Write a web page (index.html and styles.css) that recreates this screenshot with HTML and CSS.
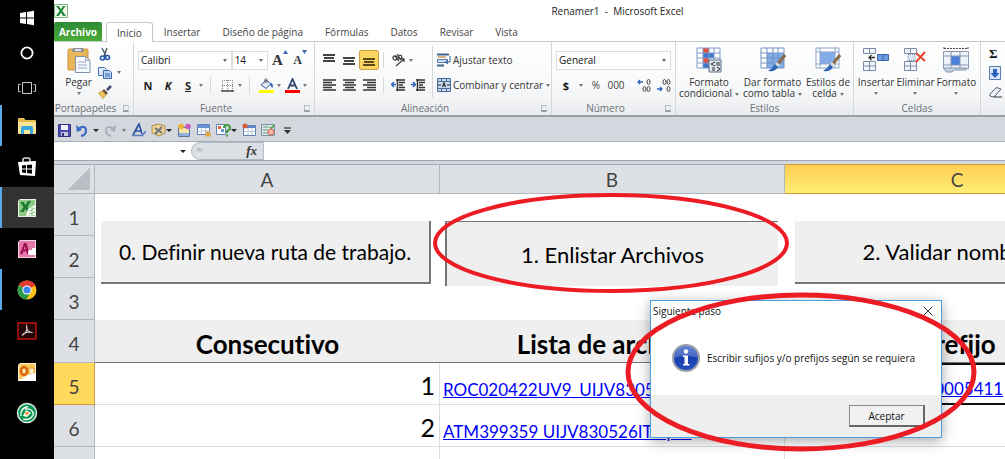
FILE: index.html
```html
<!DOCTYPE html>
<html lang="es">
<head>
    <meta charset="UTF-8">
    <meta name="viewport" content="width=device-width, initial-scale=1.0">
    <title>Renamer1 - Microsoft Excel</title>
    <link rel="stylesheet" href="styles.css">
</head>
<body>

<nav class="taskbar" aria-label="Barra de tareas">
    <button class="task short" aria-label="Inicio de Windows">
        <svg width="16" height="16" viewBox="0 0 16 16" fill="#fff"><path d="M1 3l6-1v5.500H1zM8 1.900l7-1.100v6.700H8zM1 8.500h6V14l-6-.9zM8 8.500h7v6.700L8 14.100z"/></svg>
    </button>
    <button class="task short" aria-label="Cortana">
        <svg width="16" height="16" viewBox="0 0 16 16"><circle cx="8" cy="8" r="5.600" fill="none" stroke="#fff" stroke-width="1.800"/></svg>
    </button>
    <button class="task short" aria-label="Vista de tareas">
        <svg width="20" height="16" viewBox="0 0 20 16" fill="none" stroke="#ccc"><path d="M5.500 2.500h9v11h-9zM3.500 4.500h-2v7h2M16.500 4.500h2v7h-2"/></svg>
    </button>
    <button class="task open" aria-label="Explorador de archivos">
        <svg width="20" height="18" viewBox="0 0 20 18"><path d="M1 2q0-1 1-1h5l1.500 2H18q1 0 1 1v12H1z" fill="#e9bd4f"/><path d="M1 5h18v11q0 1-1 1H2q-1 0-1-1z" fill="#fbe596"/><path d="M4 17v-6q0-2 2-2h8q2 0 2 2v6h-3v-4H7v4z" fill="#35a9e0"/></svg>
    </button>
    <button class="task" aria-label="Tienda">
        <svg width="22" height="22" viewBox="0 0 22 22"><path d="M7 6V4q0-2 2-2h3q2 0 2 2v2" fill="none" stroke="#ddd" stroke-width="1.500"/><path d="M2 6l18-1-1 15-15-1z" fill="#fff"/><path d="M6 9.500l4-.5v3.500H6zM11 9l5-.6v4.100h-5zM6 13.500h4V17l-4-.5zM11 13.500h5v4.200l-5-.6z" fill="#000"/></svg>
    </button>
    <button class="task open active" aria-label="Excel">
        <svg width="20" height="20" viewBox="0 0 20 20"><path d="M3 1h16v18H1V3z" fill="#e4f3e0"/><path d="M3 2h15v16H2V3z" fill="#8fcb86"/><path d="M3 4h3.500l2 3 2.500-4h3L10.500 9l3.500 5h-3.500l-2-3-2 3H3l3.500-5z" fill="#1d7a34"/><path d="M11 11l7-4v10l-9 1z" fill="#fff"/><path d="M12 13l6-3M12 16l6-2M15 9v8" stroke="#67b35f" stroke-width=".8"/></svg>
    </button>
    <button class="task" aria-label="Access">
        <svg width="20" height="20" viewBox="0 0 20 20"><path d="M3 1h16v18H1V3z" fill="#f8d3e4"/><path d="M3 2h15v16H2V3z" fill="#e279aa"/><path d="M3 15L7 4h2.500l3 11H10l-.7-2.500H6.200L5.500 15zM6.700 10.500h2L7.900 7.300z" fill="#9c1250"/><path d="M12 11h3V9h4v7h-7q-2-2 0-5z" fill="#fff"/></svg>
    </button>
    <button class="task open" aria-label="Chrome">
        <svg width="20" height="20" viewBox="0 0 20 20"><circle cx="10" cy="10" r="9.500" fill="#fbc116"/><path d="M10 10L1.800 5.200A9.500 9.500 0 0 1 18.200 5.200z" fill="#e33b2e"/><path d="M10 10L1.800 5.200A9.500 9.500 0 0 0 9.500 19.500L13.500 12z" fill="#2a9d4a"/><path d="M10 5.200h8.200L10 10z" fill="#e33b2e"/><circle cx="10" cy="10" r="4.600" fill="#fff"/><circle cx="10" cy="10" r="3.600" fill="#3f83ee"/></svg>
    </button>
    <button class="task" aria-label="Adobe Reader">
        <svg width="20" height="18" viewBox="0 0 20 18"><path d="M1 1h18v16H1z" fill="#250405" stroke="#c1140f" stroke-width="1.400"/><path d="M9.500 4C11 7 9 11 5 13.500 7 10.500 11 9.500 15.500 10.500 12.500 11 9 8 9.500 4z" fill="none" stroke="#ccc" stroke-width="1.200"/></svg>
    </button>
    <button class="task" aria-label="Outlook">
        <svg width="20" height="20" viewBox="0 0 20 20"><path d="M3 1h16v18H1V3z" fill="#fdeec4"/><path d="M3 2h15v16H2V3z" fill="#f9c95f"/><ellipse cx="7" cy="9" rx="3" ry="4" fill="#fbe3a6" stroke="#d9660a" stroke-width="2.400"/><path d="M12 6h5v6h-5z" fill="#fff3cf" stroke="#e79423"/><path d="M2 18l7-4 4-2 6-1v8H2z" fill="#fff"/></svg>
    </button>
    <button class="task" aria-label="Sincronización">
        <svg width="22" height="22" viewBox="0 0 22 22"><circle cx="11" cy="11" r="9.500" fill="#0d9450" stroke="#dcebe2" stroke-width="1.500"/><path d="M5 14Q4 6 12 4.500M9 7q8-1 8.500 6M17 13q-3 6-10 4" fill="none" stroke="#fff" stroke-width="1.300"/><path d="M10 8l5 3-4 4-4-1z" fill="#fff"/><circle cx="11" cy="11.500" r="1.800" fill="#f29a3f"/></svg>
    </button>
</nav>

<main class="excel">
    <header class="titlebar">
        <svg class="app-icon" width="14" height="14" viewBox="0 0 14 14"><path d="M.5.500h13v13H.5z" fill="#f4faf2" stroke="#7db97d"/><path d="M2 2h2.800L7 5l2-3h2.500L8.300 6.800 12 12H9L7 8.800 4.800 12H2l3.600-5.200z" fill="#278a3a"/></svg>
        <h1>Renamer1&nbsp; -&nbsp; Microsoft Excel</h1>
    </header>

    <nav class="tabs">
        <button class="file-tab">Archivo</button>
        <button class="tab selected">Inicio</button>
        <button class="tab">Insertar</button>
        <button class="tab">Diseño de página</button>
        <button class="tab">Fórmulas</button>
        <button class="tab">Datos</button>
        <button class="tab">Revisar</button>
        <button class="tab">Vista</button>
    </nav>

    <div class="ribbon">
        <section class="group clipboard">
            <div class="group-body">
                <button class="big">
                    <svg width="24" height="26" viewBox="0 0 24 26"><path d="M1 3q0-1 1-1h18q1 0 1 1v20H1z" fill="#eab65a" stroke="#c99443"/><path d="M6 1h10l1 4H5z" fill="#8b9099"/><path d="M8 2h6v2H8z" fill="#dfe3e8"/><path d="M8.500 9.500h10l4.500 4v12H8.500z" fill="#f6f9fd" stroke="#8193b0"/><path d="M18.500 9.500v4H23M11 15h8M11 18h9M11 21h9" fill="none" stroke="#93a6c4"/></svg>
                    <span>Pegar</span>
                    <i class="arrow"></i>
                </button>
                <div class="stack">
                    <button aria-label="Cortar"><svg width="14" height="14" viewBox="0 0 14 14"><path d="M4 1l4 8M9 1L6 9" stroke="#4b5668" stroke-width="1.400"/><circle cx="4.500" cy="11" r="2" fill="none" stroke="#2554a8" stroke-width="1.600"/><circle cx="9.500" cy="10.500" r="2" fill="none" stroke="#2554a8" stroke-width="1.600"/></svg></button>
                    <button aria-label="Copiar"><svg width="14" height="14" viewBox="0 0 14 14"><path d="M.5 1.500h6l2 2v6h-8z" fill="#dce8f8" stroke="#4c75b5"/><path d="M5.500 4.500h6l2 2v6h-8z" fill="#b9d0f0" stroke="#3d68ad"/><path d="M7 8h5M7 10h5" stroke="#3d68ad"/></svg><i class="arrow"></i></button>
                    <button aria-label="Copiar formato"><svg width="14" height="14" viewBox="0 0 14 14"><path d="M13 1L9 5" stroke="#444b77" stroke-width="2.500"/><path d="M6 4l4 4-2 2-4-4z" fill="#6a5a3e"/><path d="M4 6l4 4-3 3.500L.5 8z" fill="#edc557" stroke="#b58c2c" stroke-width=".7"/></svg></button>
                </div>
            </div>
            <h2>Portapapeles</h2><i class="launcher"></i>
        </section>

        <section class="group font">
            <div class="group-body rows">
                <div class="row">
                    <label class="combo family"><select aria-label="Fuente"><option>Calibri</option></select></label>
                    <label class="combo size"><select aria-label="Tamaño"><option>14</option></select></label>
                    <button class="ic grow" aria-label="Aumentar tamaño"><span class="serif">A</span><svg width="5" height="4" viewBox="0 0 5 4"><path d="M0 4l2.500-4L5 4z" fill="#3c66b4"/></svg></button>
                    <button class="ic grow" aria-label="Disminuir tamaño"><span class="serif small">A</span><svg width="5" height="4" viewBox="0 0 5 4"><path d="M0 0h5L2.500 4z" fill="#3c66b4"/></svg></button>
                </div>
                <div class="row">
                    <button class="ic glyph">N</button>
                    <button class="ic glyph italic">K</button>
                    <button class="ic glyph underline">S</button>
                    <i class="arrow"></i>
                    <i class="sep"></i>
                    <button class="ic" aria-label="Bordes"><svg width="13" height="13" viewBox="0 0 13 13"><path d="M1 1.500h11M1 6.500h11M1.500 1v11M6.500 1v11M11.500 1v11" stroke="#888" stroke-dasharray="1 1"/><path d="M0 12h13" stroke="#444" stroke-width="1.500"/></svg></button>
                    <i class="arrow"></i>
                    <i class="sep"></i>
                    <button class="ic" aria-label="Color de relleno"><svg width="15" height="15" viewBox="0 0 15 15"><path d="M2 7l5-5 5 4-5 4.500z" fill="#dbe7f5" stroke="#46699c"/><path d="M6 5V1.500q1-2 2 0V5" fill="none" stroke="#555"/><path d="M11 5q4 0 2.500 5-2-1-2.500-5z" fill="#2f61ad"/><path d="M0 12h15v3H0z" fill="#ff0"/></svg></button>
                    <i class="arrow"></i>
                    <button class="ic" aria-label="Color de fuente"><svg width="15" height="15" viewBox="0 0 15 15"><path d="M3 11L7.500 1 12 11M4.500 7.500h6" fill="none" stroke="#31466f" stroke-width="1.800"/><path d="M0 12h15v3H0z" fill="#f00"/></svg></button>
                    <i class="arrow"></i>
                </div>
            </div>
            <h2>Fuente</h2><i class="launcher"></i>
        </section>

        <section class="group align">
            <div class="group-body">
                <div class="rows">
                    <div class="row">
                        <button class="ic" aria-label="Alinear arriba"><svg width="12" height="12" viewBox="0 0 12 12"><path d="M0 1h12M1 4h10M0 7h12" stroke="#444" stroke-width="2"/></svg></button>
                        <button class="ic" aria-label="Alinear en el medio"><svg width="12" height="12" viewBox="0 0 12 12"><path d="M0 4h12M1 7h10M0 10h12" stroke="#444" stroke-width="2"/></svg></button>
                        <button class="ic pressed" aria-label="Alinear abajo"><svg width="12" height="12" viewBox="0 0 12 12"><path d="M0 5h12M1 8h10M0 11h12" stroke="#5b4a1c" stroke-width="2"/></svg></button>
                        <i class="sep"></i>
                        <button class="ic" aria-label="Orientación"><svg width="15" height="14" viewBox="0 0 15 14" fill="none" stroke="#444" stroke-width="1.300"><circle cx="4" cy="5" r="2"/><path d="M4 3l4 5M6 1l4 6"/><circle cx="9" cy="4" r="1.800"/><path d="M5 13l8-7M10 6h3v3"/></svg></button>
                        <i class="arrow"></i>
                    </div>
                    <div class="row">
                        <button class="ic" aria-label="Alinear a la izquierda"><svg width="13" height="12" viewBox="0 0 13 12"><path d="M0 1h13M0 3.500h9M0 6h13M0 8.500h9M0 11h13" stroke="#333" stroke-width="1.500"/></svg></button>
                        <button class="ic" aria-label="Centrar"><svg width="13" height="12" viewBox="0 0 13 12"><path d="M0 1h13M2 3.500h9M0 6h13M2 8.500h9M0 11h13" stroke="#333" stroke-width="1.500"/></svg></button>
                        <button class="ic" aria-label="Alinear a la derecha"><svg width="13" height="12" viewBox="0 0 13 12"><path d="M0 1h13M4 3.500h9M0 6h13M4 8.500h9M0 11h13" stroke="#333" stroke-width="1.500"/></svg></button>
                        <i class="sep"></i>
                        <button class="ic" aria-label="Disminuir sangría"><svg width="14" height="12" viewBox="0 0 14 12"><path d="M5 1h9M8 3.500h6M8 6h4M8 8.500h6M5 11h9M6.500 0v12" stroke="#333" stroke-width="1.500"/><path d="M5 5.500H1M3 3L.5 5.500 3 8" fill="none" stroke="#2d63b5" stroke-width="1.400"/></svg></button>
                        <button class="ic" aria-label="Aumentar sangría"><svg width="14" height="12" viewBox="0 0 14 12"><path d="M5 1h9M8 3.500h6M8 6h4M8 8.500h6M5 11h9M6.500 0v12" stroke="#333" stroke-width="1.500"/><path d="M0 5.500h4M2 3l2.500 2.500L2 8" fill="none" stroke="#2d63b5" stroke-width="1.400"/></svg></button>
                    </div>
                </div>
                <div class="rows side">
                    <button class="wide"><svg width="14" height="14" viewBox="0 0 14 14"><path d="M0 1.500h12M0 12.500h7" stroke="#45628f" stroke-width="2"/><path d="M1 3h8v2H1z" fill="#e2b384"/><path d="M.5 6.500h10v3H.5z" fill="#cfdff3" stroke="#5a7cab"/><path d="M13 3v6H9M11 7L8.500 9l2.500 2" fill="none" stroke="#315b9b"/></svg>Ajustar texto</button>
                    <button class="wide"><svg width="14" height="14" viewBox="0 0 14 14"><path d="M.5.500h13v13H.5z" fill="#c8d9ef" stroke="#4c6b9b"/><path d="M0 3.500h14M0 10.500h14M4.500 0v3M9.500 0v3M4.500 11v3M9.500 11v3" stroke="#4c6b9b"/><path d="M1 7h3M10 7h3M5.500 9L7 5l1.500 4" fill="none" stroke="#222" stroke-width="1.200"/></svg>Combinar y centrar<i class="arrow"></i></button>
                </div>
            </div>
            <h2>Alineación</h2><i class="launcher"></i>
        </section>

        <section class="group number">
            <div class="group-body rows">
                <div class="row">
                    <label class="combo format"><select aria-label="Formato de número"><option>General</option></select></label>
                </div>
                <div class="row">
                    <button class="ic glyph">$</button>
                    <i class="arrow"></i>
                    <button class="ic digits">%</button>
                    <button class="ic digits">000</button>
                    <i class="sep"></i>
                    <button class="ic" aria-label="Aumentar decimales"><svg width="14" height="13" viewBox="0 0 14 13" fill="none"><path d="M6 3H1M3 1L1 3l2 2" stroke="#2d63b5" stroke-width="1.300"/><g stroke="#444"><ellipse cx="11.500" cy="3" rx="1.500" ry="2.500"/><ellipse cx="7.500" cy="10" rx="1.500" ry="2.500"/><ellipse cx="11.500" cy="10" rx="1.500" ry="2.500"/></g></svg></button>
                    <button class="ic" aria-label="Disminuir decimales"><svg width="14" height="13" viewBox="0 0 14 13" fill="none"><path d="M0 10h5M3 8l2 2-2 2" stroke="#2d63b5" stroke-width="1.300"/><g stroke="#444"><ellipse cx="11.500" cy="3" rx="1.500" ry="2.500"/><ellipse cx="7.500" cy="3" rx="1.500" ry="2.500"/><ellipse cx="11.500" cy="10" rx="1.500" ry="2.500"/></g></svg></button>
                </div>
            </div>
            <h2>Número</h2><i class="launcher"></i>
        </section>

        <section class="group styles">
            <div class="group-body">
                <button class="big">
                    <svg width="26" height="26" viewBox="0 0 26 26"><path d="M1 1h23v20H1z" fill="#fff"/><path d="M7 1h6v5H7zM7 11h6v5H7z" fill="#e2513f"/><path d="M7 6h11v5H7zM7 16h6v5H7z" fill="#3f74cd"/><path d="M1 1h23v20H1zM1 6h23M1 11h23M1 16h23M7 1v20M13 1v20M18 1v20" fill="none" stroke="#7f9cc9"/><path d="M13 13h12v12H13z" fill="#dde6ee" stroke="#5d7083"/><path d="M19 15l-4 2 4 2M20 16h4M20 18h4M16 21h3M16 23h3M21 20l3 2-3 2" fill="none" stroke="#333"/></svg>
                    <span>Formato<br>condicional<i class="arrow after"></i></span>
                </button>
                <button class="big">
                    <svg width="26" height="26" viewBox="0 0 26 26"><path d="M1 1h23v20H1z" fill="#fff"/><path d="M7 6h17v15H7z" fill="#82ade9"/><path d="M1 1h23v20H1zM1 6h23M1 11h23M1 16h23M7 1v20M13 1v20M18 1v20" fill="none" stroke="#7391c0"/><path d="M25 8l-8 10" stroke="#8a6a4a" stroke-width="3"/><path d="M17 15l3 3-2 2-3-3z" fill="#d9d9d9"/><path d="M15 17l3 3q-2 5-10 4 4-2 7-7z" fill="#3167b5"/></svg>
                    <span>Dar formato<br>como tabla<i class="arrow after"></i></span>
                </button>
                <button class="big">
                    <svg width="26" height="26" viewBox="0 0 26 26"><path d="M1 1h23v20H1z" fill="#fff"/><path d="M5 5h15v12H5z" fill="#82ade9"/><path d="M1 1h23v20H1zM1 5h23M1 17h23M5 1v20M20 1v20" fill="none" stroke="#8ba3c7"/><path d="M25 8l-8 10" stroke="#8a6a4a" stroke-width="3"/><path d="M17 15l3 3-2 2-3-3z" fill="#d9d9d9"/><path d="M15 17l3 3q-2 5-10 4 4-2 7-7z" fill="#3167b5"/></svg>
                    <span>Estilos de<br>celda<i class="arrow after"></i></span>
                </button>
            </div>
            <h2>Estilos</h2>
        </section>

        <section class="group cells">
            <div class="group-body">
                <button class="big">
                    <svg width="26" height="26" viewBox="0 0 26 26"><path d="M.5 1.500h12v5H.5zM6.500 1v5M.5 14.500h12v9H.5zM6.500 14v9M.5 19h12" fill="#f3f6fb" stroke="#7c8ba6"/><path d="M14.500 7.500h11v6h-11z" fill="#6f9ee4" stroke="#3b63a8"/><path d="M20 7v6" stroke="#3b63a8"/><path d="M12 10.500H6M8.500 8L6 10.500 8.500 13" fill="none" stroke="#333" stroke-width="1.300"/></svg>
                    <span>Insertar</span>
                    <i class="arrow"></i>
                </button>
                <button class="big">
                    <svg width="26" height="26" viewBox="0 0 26 26"><path d="M2.500 1.500h12v5h-12zM8.500 1v5M2.500 14.500h12v9h-12zM8.500 14v9M2.500 19h12" fill="#f3f6fb" stroke="#7c8ba6"/><path d="M6 7.500h7v6H6z" fill="#dfe9f7" stroke="#6b7b95" stroke-dasharray="1 1"/><path d="M14 6l9 8M23 5l-9 10" stroke="#e8452f" stroke-width="2"/></svg>
                    <span>Eliminar</span>
                    <i class="arrow"></i>
                </button>
                <button class="big">
                    <svg width="28" height="26" viewBox="0 0 28 26"><path d="M2 1.500h24M2 0v3M26 0v3" stroke="#444" stroke-dasharray="2 1"/><path d="M1.500 4.500h25v17h-25z" fill="#eef3fa" stroke="#8597b3"/><path d="M9 9h9v9H9z" fill="#4d80dc"/><path d="M1 9h26M1 18h26M9 4v17M18 4v17" stroke="#8597b3"/><path d="M2 21h22v2H12l-2 2H4z" fill="#c4cfde" stroke="#8597b3"/></svg>
                    <span>Formato</span>
                    <i class="arrow"></i>
                </button>
            </div>
            <h2>Celdas</h2>
        </section>

        <section class="group editing">
            <div class="stack">
                <button class="sigma" aria-label="Autosuma">Σ</button>
                <button aria-label="Rellenar"><svg width="12" height="14" viewBox="0 0 12 14"><path d="M.5.500h11v13H.5z" fill="#dce8f8" stroke="#5a7cab"/><path d="M4 3h4v4h2.500L6 12 1.500 7H4z" fill="#2b62c0"/></svg></button>
                <button aria-label="Borrar"><svg width="13" height="12" viewBox="0 0 13 12"><path d="M1 8l6-6q1-1 2 0l3 1-6 7q-1 1-2 1l-3-1z" fill="#eef1f6" stroke="#51617d"/><path d="M5 11h8" stroke="#333"/></svg></button>
            </div>
        </section>
    </div>

    <div class="quick-access">
        <button aria-label="Guardar"><svg width="13" height="13" viewBox="0 0 13 13"><path d="M.5.500h12v12H.5z" fill="#4a4db0" stroke="#33357f"/><path d="M3 1h7v5H3z" fill="#eef0fb"/><path d="M3 8h7v4H3z" fill="#c9cce0"/><path d="M4 9h2v3H4z" fill="#33357f"/></svg></button>
        <button aria-label="Deshacer"><svg width="12" height="13" viewBox="0 0 12 13"><path d="M2 5q8-5 8 2 0 4-5 5" fill="none" stroke="#3a6cc4" stroke-width="2.200"/><path d="M0 1l1 7 5-2z" fill="#3a6cc4"/></svg></button>
        <i class="arrow dark"></i>
        <button aria-label="Rehacer"><svg width="12" height="13" viewBox="0 0 12 13"><path d="M10 5Q2 0 2 7q0 4 5 5" fill="none" stroke="#a8adb5" stroke-width="1.800"/><path d="M12 1l-1 7-5-2z" fill="#a8adb5"/></svg></button>
        <i class="arrow"></i>
        <button aria-label="Fuente"><svg width="14" height="14" viewBox="0 0 14 14"><path d="M1 12L7 1l3 10M3.500 8h6" fill="none" stroke="#2c559f" stroke-width="1.700"/><path d="M0 12.500h11M10 13l4-5" stroke="#5680be" stroke-width="1.600"/></svg></button>
        <button aria-label="Herramientas"><svg width="15" height="14" viewBox="0 0 15 14"><path d="M1 3l6-2 7 2v7l-6 3-7-3z" fill="#efd391" stroke="#a98b50"/><path d="M4 5l7 5M11 4l-7 7" stroke="#6b7481" stroke-width="2"/></svg><i class="arrow dark"></i></button>
        <button aria-label="Formas"><svg width="15" height="14" viewBox="0 0 15 14"><path d="M1.500 4.500h11v9h-11z" fill="#f6e4a6" stroke="#5874a5"/><path d="M2 10h10v3H2z" fill="#8fb0e2"/><circle cx="4" cy="3.500" r="2.800" fill="#f0b52d"/><circle cx="11" cy="3.500" r="2.800" fill="#c85bb8"/></svg></button>
        <button aria-label="Formulario"><svg width="14" height="14" viewBox="0 0 14 14"><path d="M.5 1.500h12v10H.5z" fill="#fff" stroke="#5f7fb5"/><path d="M1 2h11v3H1z" fill="#6b93d6"/><path d="M1 8h12M4.500 5v6M8.500 5v6" stroke="#b7c7e0"/><circle cx="11" cy="11" r="2.800" fill="#dfa543"/></svg></button>
        <button aria-label="Comprobar"><svg width="15" height="14" viewBox="0 0 15 14"><path d="M.5 1.500h9v10h-9z" fill="#fff" stroke="#6885b5"/><path d="M2 3h3v3H2z" fill="#e0604c"/><path d="M5 6h3v3H5z" fill="#6b93d6"/><path d="M8 5q0-3 3-3t3 3q0 2-3 3v2M11 11.500v2" fill="none" stroke="#3e9d3a" stroke-width="2"/></svg><i class="arrow dark"></i></button>
        <button aria-label="Ventana"><svg width="14" height="14" viewBox="0 0 14 14"><path d="M1.500 2.500h12v10h-12z" fill="#fff" stroke="#5f7fb5"/><path d="M2 3h11v2H2z" fill="#5a85cf"/><path d="M2 8.500h11M6 5v7M10 5v7" stroke="#b7c7e0"/><circle cx="3" cy="3" r="2.500" fill="#d65a38"/></svg></button>
        <button aria-label="Control"><svg width="14" height="14" viewBox="0 0 14 14"><path d="M.5 1.500h13v11H.5z" fill="#dde9ea" stroke="#78929c"/><path d="M2 4h6M2 7h5M2 10h5" stroke="#6f8f7f"/><path d="M9 4l1.500 1.500L13 2" fill="none" stroke="#3e9d3a" stroke-width="1.300"/><circle cx="10" cy="9" r="3" fill="#f3b8ae" stroke="#e0604c"/></svg></button>
        <button class="more" aria-label="Personalizar"><svg width="7" height="7" viewBox="0 0 7 7"><path d="M0 1h7" stroke="#333" stroke-width="1.200"/><path d="M0 3h7L3.500 7z" fill="#333"/></svg></button>
    </div>

    <div class="formula-bar">
        <input class="name-box" type="text" aria-label="Cuadro de nombres">
        <i class="arrow dark"></i>
        <span class="fx-area"><i class="knob"></i><button class="fx">fx</button></span>
        <input class="formula" type="text" aria-label="Barra de fórmulas">
    </div>

    <div class="sheet">
        <table>
            <colgroup><col class="col-head"><col class="col-data"><col class="col-data"><col class="col-data"></colgroup>
            <thead>
                <tr><th class="corner"><i></i></th><th>A</th><th>B</th><th class="current">C</th></tr>
            </thead>
            <tbody>
                <tr><th>1</th><td></td><td></td><td></td></tr>
                <tr><th>2</th><td></td><td></td><td></td></tr>
                <tr><th>3</th><td></td><td></td><td></td></tr>
                <tr class="titles"><th>4</th><td>Consecutivo</td><td>Lista de archivos</td><td>Prefijo</td></tr>
                <tr class="data"><th class="current">5</th><td class="num">1</td><td><a href="#">ROC020422UV9_UIJV830526IT8.pdf</a></td><td class="cursor"><a href="#">ROC020422UV9_00005411</a></td></tr>
                <tr class="data"><th>6</th><td class="num">2</td><td><a href="#">ATM399359 UIJV830526IT8.pdf</a></td><td></td></tr>
                <tr class="data"><th></th><td></td><td></td><td></td></tr>
            </tbody>
        </table>

        <!-- form controls float over the cells -->
        <button class="macro define">0. Definir nueva ruta de trabajo.</button>
        <button class="macro list">1. Enlistar Archivos</button>
        <button class="macro validate">2. Validar nombres.</button>
    </div>
</main>

<div class="dialog" role="dialog" aria-labelledby="dialog-title">
    <div class="dialog-title">
        <span id="dialog-title">Siguiente paso</span>
        <button class="close" aria-label="Cerrar"><svg width="10" height="10" viewBox="0 0 10 10"><path d="M.5.500l9 9M9.500.500l-9 9" stroke="#333"/></svg></button>
    </div>
    <div class="dialog-body">
        <svg width="28" height="28" viewBox="0 0 28 28">
            <defs><linearGradient id="info" x1="0" y1="0" x2="0" y2="1"><stop offset="0" stop-color="#3f68cf"/><stop offset=".5" stop-color="#1a40b0"/><stop offset="1" stop-color="#2450bd"/></linearGradient></defs>
            <circle cx="14" cy="14" r="13" fill="url(#info)" stroke="#9aa0aa" stroke-width="2"/>
            <path d="M2 14A12 12 0 0 1 26 14Q14 9 2 14z" fill="#fff" opacity=".2"/>
            <circle cx="14" cy="7.500" r="2.200" fill="#fff"/><path d="M11 11.500h5V20h1.500v1.500H11V20h1.500v-7H11z" fill="#fff"/>
        </svg>
        <p>Escribir sufijos y/o prefijos según se requiera</p>
    </div>
    <div class="dialog-footer">
        <button class="accept">Aceptar</button>
    </div>
</div>

<svg class="marks" width="1005" height="459" viewBox="0 0 1005 459" fill="none" stroke="#ec1c24">
    <ellipse cx="611" cy="243" rx="176" ry="48" stroke-width="4"/>
    <ellipse cx="801" cy="372" rx="173" ry="77" stroke-width="5"/>
</svg>

</body>
</html>
```
FILE: styles.css
```css
body {
    margin: 0;
    height: 100vh;
    display: flex;
    overflow: hidden;
    position: relative;
    font-family: "Open Sans", "Noto Sans", sans-serif;
    font-size: 10px;
    color: #333;
    background-color: #fff;
}

button {
    font: inherit;
    color: inherit;
    background: none;
    border: none;
    padding: 0;
    white-space: nowrap;
}

svg {
    display: block;
    flex: none;
}

h1, h2, p {
    margin: 0;
    font-size: 10px;
    font-weight: normal;
}

/* Taskbar */
.taskbar {
    width: 54px;
    flex: none;
    background-color: #000;
    display: flex;
    flex-direction: column;
}

.task {
    height: 41px;
    flex: none;
    display: flex;
    align-items: center;
    justify-content: center;
    border-left: 2px solid transparent;
    border-right: 2px solid transparent;
}

.task.short {
    height: 35px;
}

.task.open {
    border-left-color: #5ba7e8;
}

.task.active {
    background-color: #333;
}

/* Excel window */
.excel {
    flex: 1;
    min-width: 0;
    display: flex;
    flex-direction: column;
}

.titlebar {
    height: 22px;
    flex: none;
    display: flex;
    align-items: center;
    color: #222;
}

.titlebar h1 {
    flex: 1;
    padding-left: 162px;
    text-align: center;
}

.tabs {
    height: 20px;
    flex: none;
    display: flex;
    border-bottom: 1px solid #c3c8cf;
    box-sizing: border-box;
    color: #444;
}

.file-tab {
    width: 48px;
    background: linear-gradient(#2f8a37, #4aac38);
    color: #fff;
    font-weight: bold;
    border-radius: 2px 2px 0 0;
}

.tab {
    padding: 0 11px;
}

.tab.selected {
    margin-left: 4px;
    padding: 0 10px;
    height: 20px;
    background-color: #fff;
    border: 1px solid #c3c8cf;
    border-bottom: none;
    border-radius: 3px 3px 0 0;
}

/* Ribbon */
.ribbon {
    height: 75px;
    flex: none;
    display: flex;
    overflow: hidden;
    background: linear-gradient(#fff, #f8f9fa 60%, #e9ecef);
    border-bottom: 2px solid #9aa1ab;
    box-sizing: border-box;
}

.group {
    flex: none;
    position: relative;
    display: flex;
    flex-direction: column;
    box-sizing: border-box;
    border-right: 1px solid #d5d8dd;
}

.clipboard { width: 80px; }
.font { width: 181px; }
.align { width: 237px; }
.number { width: 124px; }
.styles { width: 178px; }
.cells { width: 127px; }
.editing { width: 40px; padding-left: 8px; border: none; }

.group h2 {
    line-height: 14px;
    text-align: center;
    color: #6b7076;
    padding-right: 16px;
}

.styles h2, .cells h2 {
    padding-right: 0;
}

.launcher {
    position: absolute;
    right: 4px;
    bottom: 3px;
    width: 4px;
    height: 4px;
    border: 1px solid #b5b9bf;
    border-right-color: #d5d8dc;
    border-bottom: 2px solid #9a9fa6;
}

.group-body {
    height: 60px;
    display: flex;
    justify-content: center;
}

.align .group-body {
    justify-content: flex-start;
}

.rows {
    display: flex;
    flex-direction: column;
    justify-content: flex-start;
    padding: 8px 4px 0;
    gap: 5px;
    box-sizing: border-box;
}

.side {
    height: 52px;
    margin-top: 4px;
    padding: 4px 0 0 4px;
    border-left: 1px solid #d5d8dd;
}

.row {
    height: 20px;
    display: flex;
    align-items: center;
}

.big {
    display: flex;
    flex-direction: column;
    align-items: center;
    padding-top: 5px;
    line-height: 11px;
    gap: 4px;
}

.clipboard .group-body {
    gap: 6px;
}

.stack {
    display: flex;
    flex-direction: column;
    gap: 4px;
    padding-top: 4px;
}

.stack button {
    height: 15px;
    display: flex;
    align-items: center;
    gap: 4px;
}

.arrow {
    display: inline-block;
    flex: none;
    width: 0;
    height: 0;
    margin: 0 1px;
    border: 2px solid transparent;
    border-top: 3px solid #777;
    border-bottom: none;
    vertical-align: middle;
}

.arrow.after {
    margin-left: 3px;
    margin-right: 0;
}

.arrow.dark {
    border-left-width: 3px;
    border-right-width: 3px;
    margin: 0;
    border-top-color: #222;
}

.sep {
    width: 1px;
    height: 16px;
    margin: 0 4px;
    background-color: #d5d8dd;
}

.font .sep {
    margin: 0 6px;
}

.number .arrow {
    margin: 0 3px;
}

.ic {
    width: 20px;
    height: 20px;
    flex: none;
    display: flex;
    align-items: center;
    justify-content: center;
}

.pressed {
    background-color: #fbd562;
    border: 1px solid #c9a042;
    border-radius: 2px;
    box-sizing: border-box;
}

.grow {
    align-items: flex-start;
}

.serif {
    font-family: "Liberation Serif", serif;
    font-weight: bold;
    font-size: 15px;
    line-height: 20px;
}

.serif.small {
    font-size: 12px;
}

.glyph {
    font-weight: bold;
    font-size: 11px;
    color: #222;
}

.italic { font-style: italic; }
.underline { text-decoration: underline; }

.digits {
    color: #444;
}

.combo {
    height: 19px;
    position: relative;
    box-sizing: border-box;
    border: 1px solid #d9dce0;
    background-color: #fff;
}

.combo::after {
    content: "";
    position: absolute;
    right: 4px;
    top: 7px;
    border: 2px solid transparent;
    border-top: 3px solid #666;
    border-bottom: none;
}

.combo select {
    width: 100%;
    height: 100%;
    appearance: none;
    border: none;
    padding: 0 2px;
    background: none;
    font: inherit;
    color: #111;
}

.family { width: 98px; }
.size { width: 38px; margin-right: 2px; }
.format { width: 116px; }

.wide {
    height: 20px;
    display: flex;
    align-items: center;
    gap: 2px;
}

.styles .group-body {
    gap: 4px;
}

.cells .group-body {
    gap: 2px;
}

.sigma {
    font-family: "Liberation Serif", serif;
    font-weight: bold;
    font-size: 13px;
    color: #111;
}

/* Quick access toolbar */
.quick-access {
    height: 25px;
    flex: none;
    display: flex;
    align-items: center;
    gap: 5px;
    padding: 2px 4px 0;
    box-sizing: border-box;
    background-color: #d4d7dd;
    border-bottom: 1px solid #a4acb8;
}

.quick-access button {
    display: flex;
    align-items: center;
}

.quick-access .more {
    padding-left: 4px;
}

/* Formula bar */
.formula-bar {
    height: 18px;
    flex: none;
    display: flex;
    align-items: center;
    background-color: #fff;
    border-bottom: 1px solid #9ea6b2;
}

.formula-bar input {
    height: 18px;
    box-sizing: border-box;
    border: none;
    padding: 0 4px;
    background: none;
    font: inherit;
}

.name-box {
    width: 126px;
}

.fx-area {
    width: 73px;
    height: 18px;
    margin-left: 5px;
    display: flex;
    align-items: center;
    justify-content: space-between;
    box-sizing: border-box;
    padding: 0 6px 0 4px;
    background-color: #dcdfe4;
    border: 1px solid #b4bac3;
    border-radius: 9px 0 0 9px;
}

.knob {
    width: 7px;
    height: 7px;
    border-radius: 50%;
    background: linear-gradient(#aeb3ba, #f2f3f5);
}

.fx {
    font-family: "Liberation Serif", serif;
    font-style: italic;
    font-weight: bold;
    font-size: 13px;
}

.formula {
    flex: 1;
    min-width: 0;
}

/* Sheet */
.sheet {
    flex: 1;
    min-height: 0;
    position: relative;
    overflow: hidden;
    border-top: 3px solid #d4d7dd;
    font-family: Lato, "Liberation Sans", sans-serif;
    font-variant-ligatures: none;
}

table {
    width: 1076px;
    table-layout: fixed;
    border-collapse: separate;
    border-spacing: 0;
}

.col-head { width: 41px; }
.col-data { width: 345px; }

th, td {
    box-sizing: border-box;
    height: 42px;
    padding: 0 4px;
    overflow: hidden;
    white-space: nowrap;
}

th {
    padding-top: 5px;
    background-color: #dde1e6;
    color: #444;
    font-size: 19px;
    font-weight: normal;
    border-right: 1px solid #b1b7bf;
    border-bottom: 1px solid #b1b7bf;
}

thead th {
    height: 30px;
    padding-top: 0;
    border-top: 1px solid #a5abb5;
}

th.current {
    background-color: #ffd95c;
    border-color: #d29b3b;
}

thead th.current {
    background: linear-gradient(#ffcf52, #ffed75);
}

.corner i {
    display: block;
    margin-left: auto;
    width: 22px;
    height: 22px;
    background: linear-gradient(135deg, transparent 50%, #b9bfc5 50%);
}

.titles td {
    height: 43px;
    padding-top: 5px;
    background-color: #efefef;
    border-bottom: 1px solid #777;
    text-align: center;
    font-size: 26px;
    font-weight: bold;
    color: #000;
}

.data td {
    border-right: 1px solid #dadde1;
    border-bottom: 1px solid #dadde1;
    font-size: 17px;
    vertical-align: bottom;
    padding: 0 4px 4px 3px;
}

.data .num {
    text-align: right;
    font-size: 25px;
    color: #000;
}

.data .cursor {
    border-top: 2px solid #111;
    border-bottom: 2px solid #111;
}

.data a {
    color: #00f;
}

/* Macro buttons */
.macro {
    position: absolute;
    box-sizing: border-box;
    top: 57px;
    width: 330px;
    height: 63px;
    background-color: #efefef;
    color: #000;
    font-family: inherit;
    font-size: 22px;
}

.define {
    left: 47px;
    font-size: 21px;
    border-right: 2px solid #777;
    border-bottom: 2px solid #777;
}

.list {
    left: 391px;
    width: 333px;
    height: 65px;
    border-top: 1px solid #777;
    border-left: 2px solid #777;
}

.validate {
    left: 741px;
    padding-right: 12px;
    border-bottom: 2px solid #777;
}

/* Dialog */
.dialog {
    position: absolute;
    left: 650px;
    top: 300px;
    width: 292px;
    height: 138px;
    box-sizing: border-box;
    display: flex;
    flex-direction: column;
    background-color: #fff;
    border: 1px solid #4a9fe3;
    box-shadow: 0 3px 12px rgba(0, 0, 0, 0.35);
    color: #111;
}

.dialog-title {
    height: 20px;
    display: flex;
    align-items: center;
    justify-content: space-between;
    padding: 0 8px 0 2px;
}

.dialog-body {
    flex: 1;
    display: flex;
    align-items: center;
    gap: 7px;
    padding: 0 21px;
    white-space: nowrap;
}

.dialog-footer {
    height: 42px;
    display: flex;
    align-items: center;
    justify-content: flex-end;
    padding-right: 16px;
    background-color: #efefef;
}

.accept {
    width: 76px;
    height: 22px;
    background-color: #f1f1f1;
    border: 1px solid #888;
    border-right: 2px solid #666;
    border-bottom: 2px solid #666;
}

/* Red marks drawn over the window */
.marks {
    position: absolute;
    left: 0;
    top: 0;
    pointer-events: none;
}
```
